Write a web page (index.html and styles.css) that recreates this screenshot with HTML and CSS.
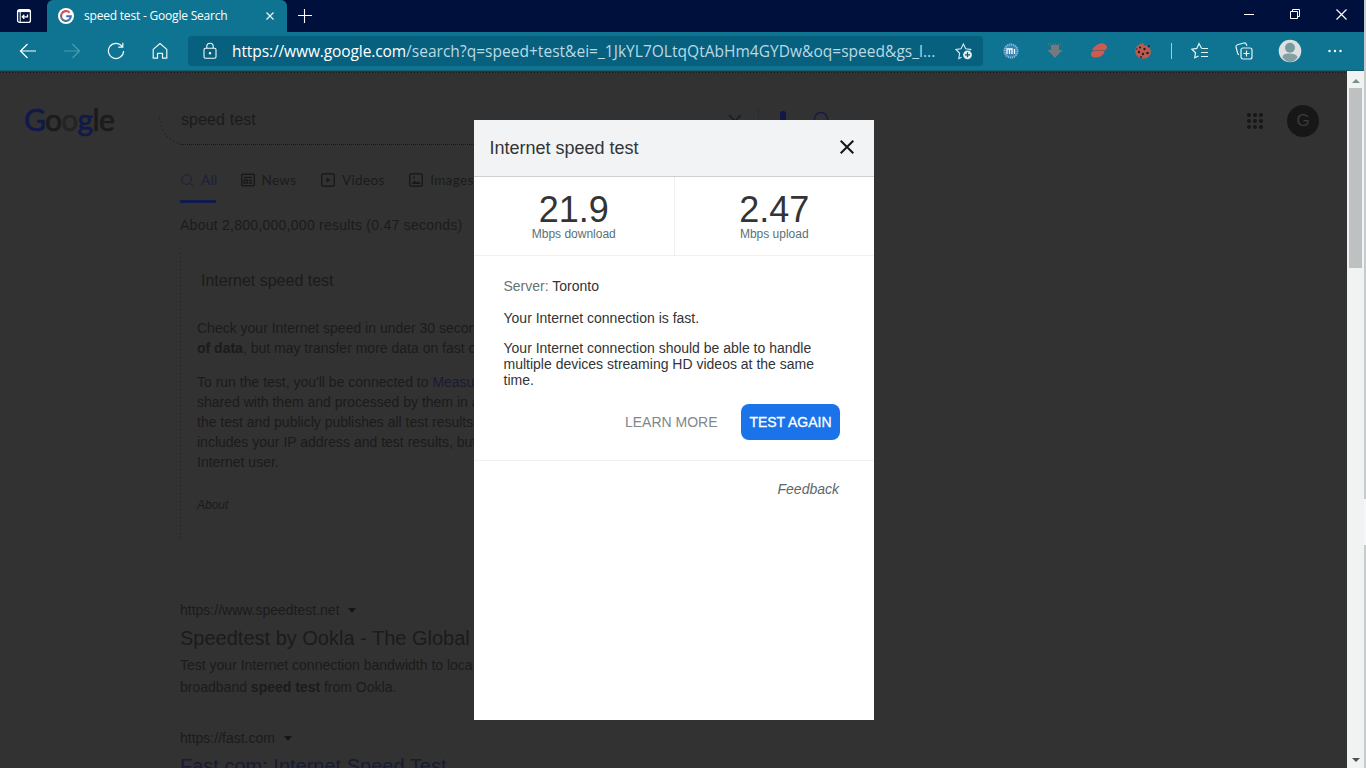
FILE: index.html
```
<!DOCTYPE html>
<html lang="en">
<head>
    <meta charset="UTF-8">
    <meta name="viewport" content="width=device-width, initial-scale=1.0">
    <title>speed test - Google Search</title>
    <link rel="stylesheet" href="styles.css">
</head>
<body>
    <div class="browser">
        <div class="titlebar">
            <div class="tab-actions">
                <svg width="16" height="16" viewBox="0 0 16 16" fill="none" stroke="#fff" stroke-width="1.3"><rect x="1.6" y="1.6" width="12.8" height="12.8" rx="2"/><path d="M1.6 3h12.8" stroke-width="2.2"/><path d="M4.2 4v10" stroke-width="1"/><path d="M11.5 6.5v2.3h-5M8.3 6.8l-2 2 2 2"/></svg>
            </div>
            <div class="tab">
                <svg width="16" height="16" viewBox="0 0 16 16"><circle cx="8" cy="8" r="8" fill="#fff"/><g fill="none" stroke-width="2.1"><path d="M11.6 4.6A4.9 4.9 0 0 0 3.6 5.8" stroke="#df4b40"/><path d="M3.6 5.8a4.9 4.9 0 0 0 0 4.4" stroke="#a55b67"/><path d="M3.6 10.2a4.9 4.9 0 0 0 7.8 1.4" stroke="#477594"/><path d="M11.4 11.6A4.9 4.9 0 0 0 12.8 8.3H8.2" stroke="#3170bd"/></g></svg>
                <span class="tab-title">speed test - Google Search</span>
                <svg width="8" height="8" viewBox="0 0 8 8" stroke="#e8f4f8" stroke-width="1.3"><path d="M.5 .5l7 7M7.5 .5l-7 7"/></svg>
            </div>
            <svg class="new-tab" width="14" height="14" viewBox="0 0 14 14" stroke="#fff" stroke-width="1.1"><path d="M0 6.5h14M6.5 0v14"/></svg>
            <div class="window-buttons">
                <svg width="10" height="10" viewBox="0 0 10 10" stroke="#fff"><path d="M0 5.5h10"/></svg>
                <svg width="10" height="10" viewBox="0 0 10 10" fill="none" stroke="#fff"><path d="M.5 2.5h7v7h-7zM2.5 2.5v-2h7v7h-2"/></svg>
                <svg width="11" height="11" viewBox="0 0 11 11" stroke="#fff" stroke-width="1.2"><path d="M.5 .5l10 10M10.5 .5l-10 10"/></svg>
            </div>
        </div>

        <div class="toolbar">
            <div class="nav-buttons">
                <svg width="18" height="16" viewBox="0 0 18 16" fill="none" stroke="#fff" stroke-width="1.2"><path d="M17 8H1.5M8.5 1L1.5 8l7 7"/></svg>
                <svg width="18" height="16" viewBox="0 0 18 16" fill="none" stroke="#4b9caf" stroke-width="1.2"><path d="M1 8h15.5M9.5 1l7 7-7 7"/></svg>
                <svg width="18" height="18" viewBox="0 0 18 18" fill="none" stroke="#f0fafc" stroke-width="1.2"><path d="M15.2 4.5A7.6 7.6 0 1 0 16.6 9M15.8 .8v4.4h-4.6"/></svg>
                <svg width="18" height="18" viewBox="0 0 18 18" fill="none" stroke="#e8f6f8" stroke-width="1.2" stroke-linejoin="round"><path d="M2.2 7.4L9 1.5l6.8 5.9v8.8h-4.3v-4.8h-5v4.8H2.2z"/></svg>
            </div>
            <div class="address">
                <svg class="lock" width="14" height="18" viewBox="0 0 14 18" fill="none" stroke="#f0fafc" stroke-width="1.1"><rect x="1" y="6.2" width="12" height="10" rx="1.5"/><path d="M3.8 6V4.4a3.2 3.2 0 0 1 6.4 0V6"/><circle cx="7" cy="11.2" r=".7" fill="#fff"/></svg>
                <span class="url"><span class="host">https://www.google.com</span>/search?q=speed+test&amp;ei=_1JkYL7OLtqQtAbHm4GYDw&amp;oq=speed&amp;gs_l...</span>
                <svg width="18" height="18" viewBox="0 0 18 18" fill="none" stroke="#d6ebef" stroke-width="1.1"><path d="M6.5 15.2l-2.7 1.3.8-5.2L1 7.4l5-.7L8.4 2l2.3 4.7 5 .7-1 1"/><circle cx="12.5" cy="12.8" r="4.4" fill="#dfeff1" stroke="none"/><path d="M12.5 10.3v5M10 12.8h5" stroke="#075f7e" stroke-width="1.2"/></svg>
            </div>
            <div class="extensions">
                <svg width="18" height="18" viewBox="0 0 18 18"><circle cx="9" cy="9" r="7.6" fill="#3585b4"/><circle cx="9" cy="9" r="6.5" fill="none" stroke="#93bddb" stroke-width="2" stroke-dasharray="1 1"/><path d="M5 12V7h5v5M7.5 7.5V12M12.5 7v5" fill="none" stroke="#fff" stroke-width="1.3"/></svg>
                <svg width="18" height="18" viewBox="0 0 18 18"><path d="M5 3h8v5h3.5L9 16 1.500 8H5z" fill="#747b80"/><path d="M2 2h4M7 2h4M12 2h4M6 5h7M5 8h8M7 11h4" stroke="#8e7067" stroke-dasharray="1 1"/></svg>
                <svg width="18" height="18" viewBox="0 0 18 18" fill="#cc5b51"><path d="M6 3.5q5-3.500 9-1.300 2.400 1 1.800 4-.4 2-2.800 2.200 1 3-2 5-3 2.500-7.500 2Q.5 15 1 11.500 1.200 9.500 3.500 9 1.500 8 3 6z"/><path d="M3 8.600l11-.3" stroke="#7d5960"/></svg>
                <svg width="18" height="18" viewBox="0 0 18 18"><path d="M9 1l2 3 2-1 1 3h2l1 4q-1 6.500-8 6.800Q1.500 16 1.200 9 2 2 9 1z" fill="#bd5a50"/><g fill="#251d24"><circle cx="6" cy="5.5" r="1.1"/><circle cx="10.5" cy="7" r="1.2"/><circle cx="5" cy="10" r="1.2"/><circle cx="9" cy="12" r="1.2"/><circle cx="13.5" cy="11" r="1.3"/><circle cx="7" cy="15" r=".9"/><circle cx="14.8" cy="4" r=".9"/><circle cx="2.8" cy="7" r=".7"/></g></svg>
            </div>
            <span class="divider"></span>
            <div class="browser-actions">
                <svg width="18" height="18" viewBox="0 0 18 18" fill="none" stroke="#e4f4f7" stroke-width="1.2"><path d="M10.5 6.2L8 1.5 5.8 6.4.9 7.2l3.6 3.6-.8 5L7.6 14M10.5 6.5H17M10 10.5h7M10 14.5h7"/></svg>
                <svg width="18" height="18" viewBox="0 0 18 18" fill="none" stroke="#e4f4f7" stroke-width="1.2"><rect x="6" y="6" width="11" height="11" rx="2"/><path d="M11.5 8.5v6M8.5 11.5h6M4 12.8Q3 12.5 2.6 11L1 5Q.7 3.3 2.4 2.7L9 1q1.8-.3 2.3 1.2l.6 1.7"/></svg>
                <svg width="24" height="24" viewBox="0 0 24 24"><circle cx="12" cy="12" r="11.3" fill="#dde0e1"/><circle cx="12" cy="8.7" r="5" fill="#799a9f"/><path d="M4.5 18.5q0-4.5 7.5-4t7.5 4Q16 23 12 23t-7.5-4.5z" fill="#849fa3"/></svg>
                <svg width="14" height="4" viewBox="0 0 14 4" fill="#fff"><circle cx="1.5" cy="2" r="1.2"/><circle cx="7" cy="2" r="1.2"/><circle cx="12.5" cy="2" r="1.2"/></svg>
            </div>
        </div>

        <div class="viewport">
            <div class="page">
                <div class="search-header">
                    <div class="logo"><span class="blue">G</span>o<span class="faint">o</span><span class="blue">g</span>le</div>
                    <div class="search-box">
                        <svg class="outline" width="692" height="47" viewBox="0 0 692 47" fill="none" stroke="#151515"><path d="M.5 20Q2 40 22 46.5" stroke-dasharray="1 3"/><path d="M22 46.5H670" stroke-dasharray="1 1"/></svg>
                        <span class="query">speed test</span>
                        <svg width="14" height="14" viewBox="0 0 14 14" stroke="#191919" stroke-width="1.3"><path d="M1 1l12 12M13 1L1 13"/></svg>
                        <span class="search-divider"></span>
                        <svg width="12" height="20" viewBox="0 0 12 20"><rect x="3" y="0" width="6" height="12" rx="3" fill="#111848"/></svg>
                        <svg class="search-icon" width="20" height="20" viewBox="0 0 20 20" fill="none" stroke="#151c45" stroke-width="1.5"><circle cx="8" cy="8" r="6.5"/><path d="M13 13l6 6"/></svg>
                    </div>
                    <svg class="apps" width="16" height="16" viewBox="0 0 16 16" fill="#171717"><circle cx="2" cy="2" r="2"/><circle cx="8" cy="2" r="2"/><circle cx="14" cy="2" r="2"/><circle cx="2" cy="8" r="2"/><circle cx="8" cy="8" r="2"/><circle cx="14" cy="8" r="2"/><circle cx="2" cy="14" r="2"/><circle cx="8" cy="14" r="2"/><circle cx="14" cy="14" r="2"/></svg>
                    <span class="avatar">G</span>
                </div>

                <div class="search-tabs">
                    <span class="search-tab active"><svg width="14" height="14" viewBox="0 0 14 14" fill="none" stroke="#1c1f3c"><circle cx="6.5" cy="6.5" r="4.8"/><path d="M10 10l3.5 3.5"/></svg>All</span>
                    <span class="search-tab"><svg width="14" height="14" viewBox="0 0 14 14" fill="none" stroke="#191919" stroke-width="1.4"><rect x=".7" y="1.2" width="12.6" height="11.6" rx="1"/><path d="M3 4.5h8M3 7h3.5v3H3zM8 7.5h3M8 10h3"/></svg>News</span>
                    <span class="search-tab"><svg width="14" height="14" viewBox="0 0 14 14" fill="none" stroke="#191919" stroke-width="1.4"><rect x=".7" y=".7" width="12.6" height="12.6" rx="1.5"/><path d="M5.5 4.5v5L9.5 7z" fill="#191919" stroke="none"/></svg>Videos</span>
                    <span class="search-tab"><svg width="14" height="14" viewBox="0 0 14 14" fill="none" stroke="#191919" stroke-width="1.4"><rect x=".7" y=".7" width="12.6" height="12.6" rx="1.5"/><path d="M2.5 11l3-3.5L7.5 9.5 9 8l3 3z" fill="#191919" stroke="none"/><path d="M4 4.5h2"/></svg>Images</span>
                </div>

                <div class="results">
                    <div class="stats">About 2,800,000,000 results (0.47 seconds)</div>
                    <div class="speed-card">
                        <h2>Internet speed test</h2>
                        <p>Check your Internet speed in under 30 secon<br><b>of data</b>, but may transfer more data on fast c</p>
                        <p>To run the test, you'll be connected to <span class="link">Measu</span><br>shared with them and processed by them in a<br>the test and publicly publishes all test results<br>includes your IP address and test results, but<br>Internet user.</p>
                        <div class="about">About</div>
                    </div>
                    <div class="result">
                        <div class="cite">https://www.speedtest.net <span class="caret"></span></div>
                        <h3>Speedtest by Ookla - The Global</h3>
                        <p>Test your Internet connection bandwidth to loca<br>broadband <b>speed test</b> from Ookla.</p>
                    </div>
                    <div class="result">
                        <div class="cite">https://fast.com <span class="caret"></span></div>
                        <h3 class="link">Fast.com: Internet Speed Test</h3>
                    </div>
                </div>
            </div>

            <div class="scrollbar">
                <span class="arrow-up"></span>
                <span class="thumb"></span>
                <span class="arrow-down"></span>
            </div>

            <div class="modal">
                <div class="modal-header">
                    <span>Internet speed test</span>
                    <svg width="14" height="14" viewBox="0 0 14 14" stroke="#151515" stroke-width="2"><path d="M.7 .7l12.6 12.6M13.3 .7L.7 13.3"/></svg>
                </div>
                <div class="speeds">
                    <div class="speed"><span class="value">21.9</span><span class="unit">Mbps download</span></div>
                    <div class="speed"><span class="value">2.47</span><span class="unit">Mbps upload</span></div>
                </div>
                <div class="modal-body">
                    <p class="server"><span>Server:</span> Toronto</p>
                    <p>Your Internet connection is fast.</p>
                    <p>Your Internet connection should be able to handle multiple devices streaming HD videos at the same time.</p>
                    <div class="buttons">
                        <button class="learn-more">LEARN MORE</button>
                        <button class="test-again">TEST AGAIN</button>
                    </div>
                </div>
                <div class="feedback">Feedback</div>
            </div>
        </div>
    </div>
    <div class="desktop-edge"><span></span></div>
</body>
</html>
```
FILE: styles.css
```
* {
    box-sizing: border-box;
}
body {
    margin: 0;
    display: flex;
    width: 1366px;
    height: 768px;
    overflow: hidden;
    font-family: "Liberation Sans", Arial, sans-serif;
    background-color: #323232;
}
svg {
    display: block;
    flex-shrink: 0;
}
.browser {
    display: flex;
    flex-direction: column;
    width: 1364px;
    height: 768px;
}
.desktop-edge {
    width: 2px;
    padding-top: 499px;
    background: #c8cbcd;
}
.desktop-edge span {
    display: block;
    height: 46px;
    background: #f5f6f7;
}

/* title bar */
.titlebar {
    display: flex;
    height: 32px;
    background: #00103d;
}
.tab-actions {
    display: flex;
    align-items: center;
    justify-content: center;
    width: 47px;
}
.tab {
    display: flex;
    align-items: center;
    width: 240px;
    padding: 0 13px 0 11px;
    border-radius: 6px 6px 0 0;
    background: #0f7491;
    color: #fff;
}
.tab-title {
    flex: 1;
    margin-left: 10px;
    padding-bottom: 1px;
    font-family: "Open Sans", sans-serif;
    font-size: 12px;
    letter-spacing: -0.2px;
    white-space: nowrap;
}
.new-tab {
    margin: 9px 0 0 11px;
}
.window-buttons {
    display: flex;
    align-items: center;
    gap: 36px;
    margin-left: auto;
    padding: 0 17px 4px 0;
}

/* toolbar */
.toolbar {
    display: flex;
    align-items: center;
    height: 39px;
    background: #0f7491;
    border-bottom: 1px solid #155e70;
}
.nav-buttons {
    display: flex;
    align-items: center;
    gap: 26px;
    width: 188px;
    padding-left: 19px;
}
.address {
    display: flex;
    align-items: center;
    width: 795px;
    height: 30px;
    padding: 0 10px 0 15px;
    border-radius: 4px;
    background: #08607f;
}
.url {
    flex: 1;
    margin-left: 15px;
    font-family: "Open Sans", sans-serif;
    font-size: 15.5px;
    letter-spacing: 0.03px;
    white-space: nowrap;
    color: #b9dae2;
}
.host {
    letter-spacing: -0.1px;
    color: #fff;
}
.extensions {
    display: flex;
    gap: 26px;
    margin-left: 19px;
}
.divider {
    width: 1px;
    height: 16px;
    margin-left: 19px;
    background: #a6cbd5;
}
.browser-actions {
    display: flex;
    align-items: center;
    gap: 26px;
    margin-left: 19px;
}
.browser-actions svg:nth-child(3) {
    margin-left: -1px;
}

/* dimmed search page */
.viewport {
    position: relative;
    display: flex;
    height: 697px;
}
.page {
    width: 1347px;
    overflow: hidden;
    padding-top: 1px;
    background: repeating-linear-gradient(to right, #181818 0 1px, #323232 1px 3px) 0 1px / 100% 1px no-repeat #323232;
    color: #1b1b1b;
}
.search-header {
    display: flex;
    align-items: center;
    height: 98px;
    padding-left: 24px;
}
.logo {
    width: 135px;
    padding-bottom: 4px;
    font-family: Lato, sans-serif;
    font-size: 30px;
    letter-spacing: -0.7px;
    color: #1b1b1b;
    -webkit-text-stroke: 0.7px;
}
.logo .blue {
    color: #11194b;
}
.logo .faint {
    color: #242424;
}
.search-box {
    position: relative;
    display: flex;
    align-items: center;
    width: 692px;
    height: 47px;
    padding: 0 18px 0 22px;
}
.outline {
    position: absolute;
    top: 0;
    left: 0;
}
.query {
    flex: 1;
    padding-bottom: 2px;
    font-size: 16px;
    letter-spacing: 0.1px;
}
.search-divider {
    height: 24px;
    margin: 0 18px 0 16px;
    border-left: 1px dotted #262626;
}
.search-icon {
    margin-left: 24px;
}
.apps {
    margin-left: auto;
}
.avatar {
    width: 32px;
    height: 32px;
    margin: 0 28px 0 24px;
    border-radius: 50%;
    background: #171717;
    color: #3b3b3b;
    font-size: 17px;
    line-height: 32px;
    text-align: center;
}
.search-tabs {
    display: flex;
    gap: 24.5px;
    height: 33px;
    padding-left: 180px;
}
.search-tab {
    display: flex;
    gap: 7px;
    height: 33px;
    padding-top: 3px;
    font-family: Lato, sans-serif;
    font-size: 13.5px;
    line-height: 15px;
    letter-spacing: 0.35px;
}
.search-tab.active {
    width: 36px;
    border-bottom: 3px solid #101a4c;
    color: #1b1e3e;
}
.results {
    padding-left: 180px;
    white-space: nowrap;
}
.stats {
    margin: 14px 0 20px;
    font-size: 14px;
    line-height: 16px;
    letter-spacing: 0.26px;
}
.speed-card {
    height: 288px;
    padding: 18px 0 0 17px;
    background: repeating-linear-gradient(to bottom, #1c1c1c 0 1px, #323232 1px 4px) 0 0 / 1px 100% no-repeat;
}
.speed-card h2 {
    margin: 0 0 27px 4px;
    font-size: 16px;
    font-weight: normal;
    line-height: 20px;
}
.speed-card p {
    margin: 0 0 14px;
    font-size: 14px;
    line-height: 20px;
}
.about {
    margin-top: 25px;
    font-size: 12px;
    font-style: italic;
    line-height: 16px;
}
.result {
    margin-top: 60px;
}
.result + .result {
    margin-top: 31px;
}
.cite {
    font-size: 14px;
    line-height: 18px;
}
.caret {
    display: inline-block;
    margin: 0 0 2px 5px;
    border: 4px solid transparent;
    border-top: 5px solid #151515;
    border-bottom: none;
}
.result h3 {
    margin: 6px 0 3px;
    font-size: 20px;
    font-weight: normal;
    line-height: 26px;
}
.result p {
    margin: 0;
    font-size: 14px;
    line-height: 22px;
}
.link {
    color: #191b31;
}

/* scrollbar */
.scrollbar {
    display: flex;
    flex-direction: column;
    align-items: center;
    width: 17px;
    padding: 8px 0 6px;
    background: #f1f3f3;
}
.arrow-up {
    border: 4px solid transparent;
    border-bottom-color: #78918d;
    border-top: none;
}
.arrow-down {
    margin-top: auto;
    border: 4px solid transparent;
    border-top-color: #505050;
    border-bottom: none;
}
.thumb {
    width: 13px;
    height: 180px;
    margin-top: 5px;
    background: #bec1c1;
}

/* speed test dialog */
.modal {
    position: absolute;
    top: 49px;
    left: 474px;
    width: 400px;
    height: 600px;
    background: #fff;
    color: #323436;
}
.modal-header {
    display: flex;
    align-items: center;
    justify-content: space-between;
    height: 57px;
    padding: 0 20px 2px 15.5px;
    border-bottom: 1px solid #cdd0d1;
    background: #f1f3f4;
    font-size: 18px;
}
.modal-header span {
    padding-top: 2px;
}
.speeds {
    display: flex;
    height: 79px;
    border-bottom: 1px solid #f0f0f0;
}
.speed {
    display: flex;
    flex: 1;
    flex-direction: column;
    align-items: center;
    padding-top: 15px;
}
.speed:first-child {
    border-right: 1px solid #f0f0f0;
}
.value {
    font-size: 36px;
    line-height: 35px;
}
.unit {
    font-size: 12px;
    line-height: 14px;
    color: #587174;
}
.modal-body {
    height: 205px;
    padding: 22px 34px 0 29.5px;
    border-bottom: 1px solid #f0f0f0;
    font-size: 14px;
    line-height: 16px;
}
.modal-body p {
    margin: 0 0 14px;
}
.modal-body .server {
    margin-bottom: 16px;
}
.server span {
    color: #667476;
}
.buttons {
    display: flex;
    justify-content: flex-end;
    padding-top: 2px;
}
.buttons button {
    height: 36px;
    padding: 0;
    border: none;
    font-family: inherit;
    font-size: 14px;
}
.buttons .learn-more {
    margin-right: 23.5px;
    background: none;
    color: #80878a;
}
.buttons .test-again {
    width: 99px;
    border-radius: 8px;
    background: #1a73e8;
    color: #fff;
    -webkit-text-stroke: 0.3px;
}
.feedback {
    padding: 20px 35px 0 0;
    font-size: 14px;
    font-style: italic;
    line-height: 16px;
    text-align: right;
    color: #5c6769;
}
```
